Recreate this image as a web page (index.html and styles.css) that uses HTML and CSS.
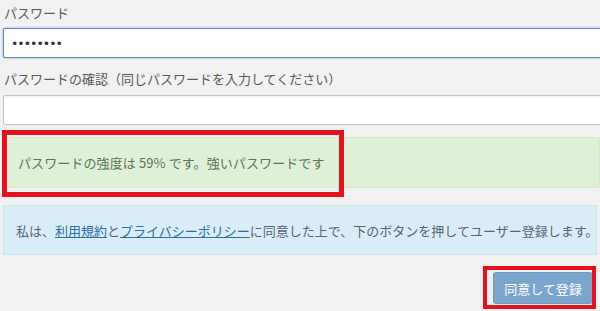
FILE: index.html
```html
<!DOCTYPE html>
<html lang="ja">
<head>
<meta charset="utf-8">
<link rel="stylesheet" href="styles.css">
</head>
<body>
<div class="form">
  <div class="label first">パスワード</div>
  <div class="input focus"><span class="dots">••••••••</span></div>
  <div class="label second">パスワードの確認（同じパスワードを入力してください）</div>
  <div class="input"></div>
  <div class="alert success">パスワードの強度は 59% です。強いパスワードです</div>
  <div class="alert info">私は、<a href="#">利用規約</a>と<a href="#">プライバシーポリシー</a>に同意した上で、下のボタンを押してユーザー登録します。</div>
  <div class="actions"><button class="btn">同意して登録</button></div>
</div>
<div class="mark mark-alert"></div>
<div class="mark mark-btn"></div>
</body>
</html>
```
FILE: styles.css
```css
html, body {
  margin: 0;
  padding: 0;
  background: #f1f1f1;
  overflow: hidden;
  width: 600px;
  height: 311px;
}
body {
  position: relative;
  font-family: "Noto Sans CJK JP", "Noto Sans", sans-serif;
  font-size: 13px;
  color: #555;
}
.form {
  padding-left: 3px;
  width: 594px;
}
.label {
  line-height: 20px;
  height: 20px;
  padding-left: 1px;
  color: #5a5a5a;
}
.label.first { padding-top: 3px; }
.label.second { margin-top: 11px; }
.input {
  box-sizing: border-box;
  height: 30px;
  width: 620px;
  margin-top: 5px;
  background: #fff;
  border: 1px solid #c4c4c4;
  border-radius: 2px;
  box-shadow: inset 0 1px 2px rgba(0,0,0,.07);
  display: flex;
  align-items: center;
  padding-left: 7px;
}
.label.second + .input { margin-top: 6px; }
.input.focus {
  border-color: #5b8fc9;
  box-shadow: 0 0 2px rgba(30,110,190,.6);
}
.dots {
  font-family: "DejaVu Sans", sans-serif;
  font-size: 12.5px;
  letter-spacing: -1px;
  color: #333;
}
.alert {
  box-sizing: border-box;
  border: 1px solid transparent;
  border-radius: 2px;
}
.success {
  margin-top: 12px;
  height: 51px;
  width: 597px;
  background: #dff0d8;
  border-color: #d6e9c6;
  color: #5d7752;
  padding-left: 14px;
  display: flex;
  align-items: center;
  letter-spacing: 0.1px;
}
.info {
  margin-top: 17px;
  height: 50px;
  width: 594px;
  background: #d9edf7;
  border-color: #c8e5f0;
  color: #566775;
  padding-left: 12px;
  display: flex;
  align-items: center;
  white-space: nowrap;
}
.info a {
  color: #2f6ea8;
  text-decoration: underline;
}
.actions {
  margin-top: 17px;
  display: flex;
  justify-content: flex-end;
  padding-right: 4px;
}
.btn {
  box-sizing: border-box;
  width: 100px;
  height: 32px;
  border: 1px solid #6f9bc4;
  border-radius: 3px;
  background: #7ba5cb;
  color: #fff;
  font-family: "Noto Sans CJK JP", "Noto Sans", sans-serif;
  font-size: 13px;
  padding: 0;
}
.mark {
  position: absolute;
  box-sizing: border-box;
  border: 5px solid #e4101c;
}
.mark-alert {
  left: 2px;
  top: 130px;
  width: 342px;
  height: 67px;
}
.mark-btn {
  left: 483px;
  top: 266px;
  width: 113px;
  height: 43px;
  border-width: 4px;
}
```
